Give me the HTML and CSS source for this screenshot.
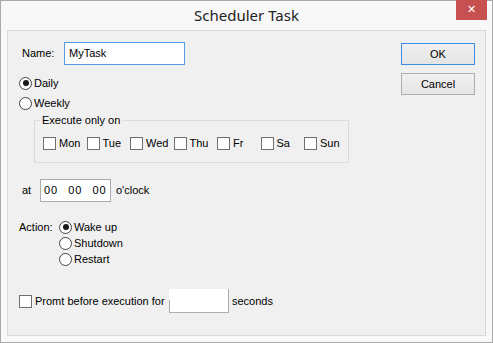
FILE: index.html
```html
<!DOCTYPE html>
<html lang="en">
<head>
	<meta charset="UTF-8">
	<title>Scheduler Task</title>
	<link rel="stylesheet" href="styles.css">
</head>
<body>
	<div class="window">
		<div class="titlebar">
			<span></span>
			<span class="title">Scheduler Task</span>
			<span class="close">&#x2715;</span>
		</div>
		<div class="client">
			<div class="form">
				<div class="name-row">
					<span class="name-label">Name:</span>
					<span class="edit edit-focus">MyTask</span>
				</div>
				<div class="radio-row daily"><span class="radio on"></span><span>Daily</span></div>
				<div class="radio-row weekly"><span class="radio"></span><span>Weekly</span></div>
				<fieldset class="days">
					<legend>Execute only on</legend>
					<div class="day-list">
						<span class="day"><span class="check"></span>Mon</span>
						<span class="day"><span class="check"></span>Tue</span>
						<span class="day"><span class="check"></span>Wed</span>
						<span class="day"><span class="check"></span>Thu</span>
						<span class="day"><span class="check"></span>Fr</span>
						<span class="day"><span class="check"></span>Sa</span>
						<span class="day"><span class="check"></span>Sun</span>
					</div>
				</fieldset>
				<div class="time-row">
					<span class="at-label">at</span>
					<span class="edit time"><span>00</span><span>00</span><span>00</span></span>
					<span class="oclock">o'clock</span>
				</div>
				<div class="action">
					<span class="action-label">Action:</span>
					<div class="radio-row"><span class="radio on"></span><span>Wake up</span></div>
					<div class="radio-row"><span class="radio"></span><span>Shutdown</span></div>
					<div class="radio-row"><span class="radio"></span><span>Restart</span></div>
				</div>
				<div class="prompt-row">
					<span class="check"></span>
					<span class="prompt-text">Promt before execution for</span>
					<span class="seconds-box"></span>
					<span class="seconds">seconds</span>
				</div>
			</div>
			<div class="buttons">
				<span class="btn btn-default">OK</span>
				<span class="btn">Cancel</span>
			</div>
		</div>
	</div>
</body>
</html>
```
FILE: styles.css
```css
body{margin:0;font:11px/13px "Liberation Sans",Arial,sans-serif;color:#000;}
.window{width:493px;height:343px;box-sizing:border-box;border:1px solid #aaa;background:#f8f8f8;display:flex;flex-direction:column;}
.titlebar{height:29px;display:grid;grid-template-columns:1fr auto 1fr;}
.title{font:15px/29px "Noto Sans","Open Sans",sans-serif;color:#222;}
.close{justify-self:end;width:31px;height:20px;margin-right:5px;margin-top:-1px;background:#c75050;color:#fff;font:bold 11px/20px "DejaVu Sans",sans-serif;text-align:center;}
.client{flex:1;margin:0 6px 6px 6px;border:1px solid #d9d9d9;background:#f0f0f0;display:flex;}
.form{padding:11px 0 0 11px;}
.name-row{display:flex;align-items:center;height:23px;padding-left:3px;}
.name-label{width:42px;}
.edit{box-sizing:border-box;height:23px;background:#fff;border:1px solid #abadb3;display:flex;align-items:center;}
.edit-focus{width:121px;border-color:#569de5;padding-left:4px;}
.radio-row{display:flex;align-items:center;height:16px;gap:2px;}
.daily{margin-top:10px;}
.weekly{margin-top:4px;}
.radio{width:13px;height:13px;box-sizing:border-box;border:1px solid #444;border-radius:50%;background:#fff;position:relative;}
.radio.on::after{content:"";position:absolute;left:2.5px;top:2.5px;width:6px;height:6px;border-radius:50%;background:#1a1a1a;}
.days{margin:3px 0 0 15px;width:315px;box-sizing:border-box;border:1px solid #dcdcdc;padding:0 0 12px 8px;}
.days legend{padding:0 2px;margin-left:-3px;line-height:13px;}
.day-list{display:flex;margin-top:10px;}
.day{display:flex;align-items:center;width:43.5px;height:13px;gap:3px;}
.check{width:13px;height:13px;box-sizing:border-box;border:1px solid #707070;background:#fff;flex:none;}
.time-row{display:flex;align-items:center;margin-top:16px;padding-left:3px;height:23px;}
.at-label{width:18px;}
.time{width:71px;padding-left:3px;gap:10px;letter-spacing:1px;}
.oclock{margin-left:5px;}
.action{display:grid;grid-template-columns:40px auto;margin-top:17px;}
.action-label{grid-row:1 / 4;line-height:16px;}
.prompt-row{display:flex;align-items:center;height:24px;margin-top:22px;}
.prompt-text{margin-left:3px;width:134px;}
.seconds-box{width:60px;height:24px;box-sizing:border-box;border-right:1px solid #abadb3;border-bottom:1px solid #abadb3;background:linear-gradient(#abadb3,#abadb3) left bottom / 1px 12px no-repeat,#fff;}
.seconds{margin-left:3px;}
.buttons{margin-left:auto;margin-right:10px;padding-top:12px;display:flex;flex-direction:column;gap:8px;}
.btn{width:74px;height:22px;box-sizing:border-box;border:1px solid #adadad;background:linear-gradient(#f0f0f0,#e5e5e5);text-align:center;line-height:20px;}
.btn-default{border-color:#3c8de0;}
```
